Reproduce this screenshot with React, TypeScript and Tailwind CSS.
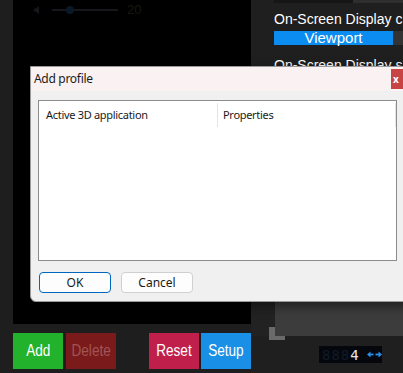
import React from "react";

export default function App() {
  const arial = { fontFamily: '"Liberation Sans", Arial, sans-serif' } as React.CSSProperties;
  const ui = { fontFamily: '"Noto Sans", "Open Sans", sans-serif' } as React.CSSProperties;
  const btn = "w-[50px] flex items-center justify-center";
  const lbl = "inline-block scale-x-[0.85]";
  return (
    <div className="relative w-[403px] h-[373px] overflow-hidden bg-[#1e1e1e] flex" style={arial}>
      {/* left strip */}
      <div className="w-[13px] shrink-0 bg-[#1e1e1e]" />
      {/* main column */}
      <div className="w-[238px] shrink-0 flex flex-col">
        <div className="h-[324px] bg-black relative">
          <div className="flex items-center pl-[20px] h-[14px] mt-[3px]">
            <svg width="10" height="10" viewBox="0 0 10 10">
              <path d="M1 3.5h2l3-2.5v8l-3-2.5H1z" fill="#15171a" />
            </svg>
            <div className="relative ml-[9px] w-[66px] h-[2px] bg-[#15171a]">
              <div className="absolute left-[14px] top-[-3px] w-[8px] h-[8px] rounded-full bg-[#0a1828]" />
            </div>
            <span className="text-[13px] text-[#18180f] ml-[9px]">20</span>
          </div>
        </div>
        <div className="mt-[9px] flex h-[36px] text-[16px]">
          <div className={`${btn} bg-[#22b22b] text-white`}><span className={lbl}>Add</span></div>
          <div className={`${btn} ml-[3px] bg-[#7a1a1a] text-[#a05555]`}><span className={lbl}>Delete</span></div>
          <div className={`${btn} ml-[33px] bg-[#c11f4b] text-white`}><span className={lbl}>Reset</span></div>
          <div className={`${btn} ml-[2px] bg-[#1a8fe6] text-white`}><span className={lbl}>Setup</span></div>
        </div>
      </div>
      {/* right column */}
      <div className="w-[152px] shrink-0 flex flex-col bg-[#1f1f1f]">
        <div className="flex h-[3px]">
          <div className="w-[23px]" />
          <div className="w-[79px] bg-[#161616]" />
          <div className="flex-1 bg-[#2e2e2e]" />
        </div>
        <div className="pl-[23px] text-white text-[14px] leading-[18px] mt-[7px] whitespace-nowrap">On-Screen Display c</div>
        <div className="flex mt-[3px] h-[14px]">
          <div className="w-[23px]" />
          <div className="w-[119px] bg-[#0a8cf0] text-white text-[15px] leading-[14px] flex justify-center">Viewport</div>
          <div className="flex-1 bg-[#333333]" />
        </div>
        <div className="pl-[23px] text-white text-[14px] leading-[18px] mt-[11px] whitespace-nowrap">On-Screen Display s</div>
        <div className="flex mt-[225px]">
          <div className="w-[24px] h-[37px] bg-[#222222] flex flex-col justify-end items-end">
            <div className="w-[6px] h-[9px] bg-[#6a6a6a]" />
          </div>
          <div className="flex-1 h-[37px] bg-[#3c3c3c]" />
        </div>
        <div className="flex">
          <div className="w-[18px]" />
          <div className="w-[16px] h-[4px] bg-[#6a6a6a]" />
        </div>
        <div className="flex mt-[6px] ml-[68px]">
          <div className="w-[63px] h-[17px] bg-[#05070c] flex items-center pl-[3px] gap-[7px]">
            <span className="text-[14px] leading-[14px] tracking-[1px] text-[#101a2a]" style={{ fontFamily: '"DejaVu Sans Mono", monospace' }}>
              888<span className="text-[#e8e8e8]">4</span>
            </span>
            <svg width="15" height="7" viewBox="0 0 15 7">
              <path d="M0 3.5L3.5 0.5V6.5Z M15 3.5L11.5 0.5V6.5Z" fill="#2a8fe6" />
              <rect x="3" y="2.6" width="3.5" height="1.8" fill="#2a8fe6" />
              <rect x="8.5" y="2.6" width="3.5" height="1.8" fill="#2a8fe6" />
            </svg>
          </div>
        </div>
      </div>

      {/* dialog */}
      <div className="absolute left-[30px] top-[66px] w-[400px] h-[236px] bg-[#f0f0f0] border border-[#9a9a9a] rounded-bl-[6px] shadow-[0_4px_12px_rgba(0,0,0,0.5)] flex flex-col" style={ui}>
        <div className="h-[24px] bg-[#faf2f2] flex items-start">
          <div className="text-[12px] tracking-[-0.3px] text-[#1a1a1a] pl-[3px] pt-[4px] leading-[16px]">Add profile</div>
          <div className="ml-auto mr-[12px] mt-[2px] w-[26px] h-[20px] bg-[#c84343] text-white text-[10px] font-bold flex items-center justify-start pl-[2px] leading-none">x</div>
        </div>
        <div className="mx-[7px] mt-[9px] w-[359px] h-[161px] bg-white border border-[#8c8c8c] flex flex-col">
          <div className="flex h-[26px] items-center text-[11px] tracking-[-0.3px] text-[#1a1a1a]">
            <div className="w-[179px] pl-[7px] h-[24px] mt-[2px] flex items-center border-r border-[#e5e5e5]">Active 3D application</div>
            <div className="pl-[5px] flex-1 h-[24px] mt-[2px] flex items-center border-r border-[#e5e5e5]">Properties</div>
          </div>
        </div>
        <div className="flex mt-[11px] ml-[8px] gap-[10px] text-[12px] text-[#1a1a1a]">
          <div className="w-[72px] h-[21px] rounded-[4px] border border-[#0067c0] bg-[#fdfdfd] flex items-center justify-center">OK</div>
          <div className="w-[72px] h-[21px] rounded-[4px] border border-[#d0d0d0] bg-[#fdfdfd] flex items-center justify-center">Cancel</div>
        </div>
      </div>
    </div>
  );
}
